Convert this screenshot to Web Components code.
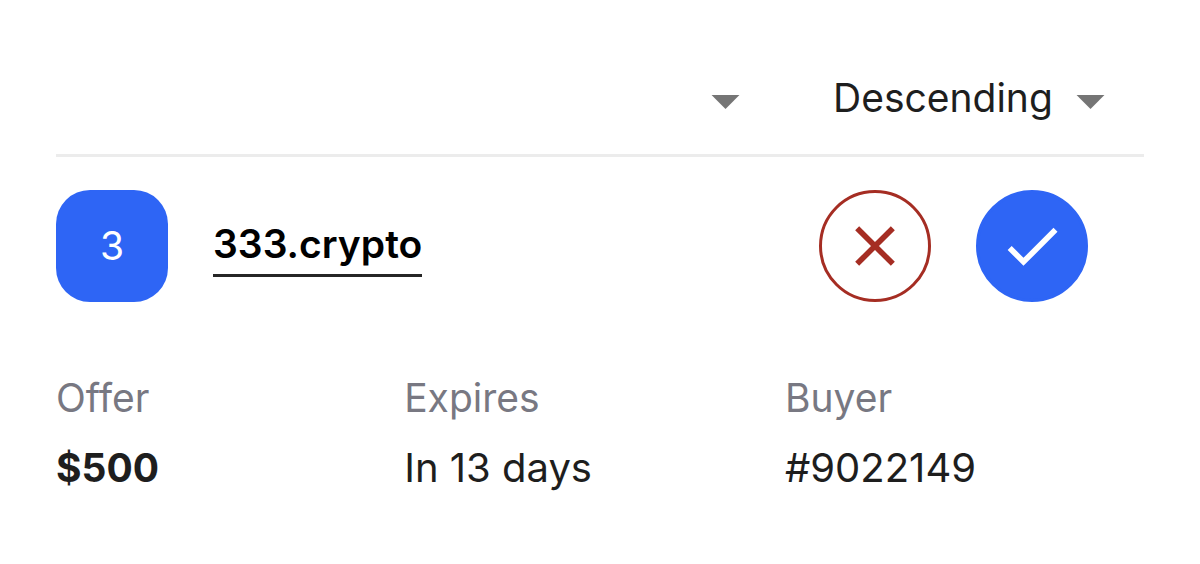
<!DOCTYPE html>
<html lang="en">
<head>
<meta charset="utf-8">
<meta name="viewport" content="width=device-width, initial-scale=1">
<title>Offers</title>
<style>
body { margin: 0; background: #fff; color: #1e1e1e; font: 400 39px/48px Inter, sans-serif; font-optical-sizing: none; font-variation-settings: "opsz" 14; font-variant-ligatures: no-common-ligatures; }
</style>
</head>
<body>
<offer-list></offer-list>
<script>
class BaseElement extends HTMLElement {
  connectedCallback() {
    if (this.shadowRoot) return;
    this.attachShadow({ mode: 'open' }).innerHTML = this.render();
  }
}

customElements.define('sort-select', class extends BaseElement {
  render() {
    const option = this.getAttribute('option') || '';
    return `<style>
      :host { display: grid; align-items: center; min-width: 0; }
      select, svg { grid-area: 1 / 1; }
      select { appearance: none; box-sizing: border-box; width: 100%; height: 67px; margin: 0; padding: 0 67px 5px 0; border: 0; background: none; color: inherit; font: inherit; font-variation-settings: inherit; line-height: 48px; }
      svg { justify-self: end; width: 67px; height: 67px; fill: #757575; pointer-events: none; }
    </style>
    <select aria-label="${this.getAttribute('label')}"><option>${option}</option></select>
    <svg viewBox="0 0 24 24" aria-hidden="true"><path d="M7 10l5 5 5-5z"/></svg>`;
  }
});

customElements.define('domain-tile', class extends BaseElement {
  render() {
    return `<style>
      :host { display: grid; place-items: center; flex: none; width: 112px; height: 112px; border-radius: 34px; background: #2e65f5; color: #fff; }
    </style><slot></slot>`;
  }
});

customElements.define('domain-link', class extends BaseElement {
  render() {
    return `<style>
      :host { display: block; }
      a { display: block; padding: 5px 0 6px; border-bottom: 3px solid #262626; color: #000; font-weight: 600; text-decoration: none; }
    </style><a href="#domain"><slot></slot></a>`;
  }
});

customElements.define('round-action', class extends BaseElement {
  render() {
    const paths = {
      reject: 'M19 6.41L17.59 5 12 10.59 6.41 5 5 6.41 10.59 12 5 17.59 6.41 19 12 13.41 17.59 19 19 17.59 13.41 12z',
      accept: 'M9 16.17L4.83 12l-1.42 1.41L9 19 21 7l-1.41-1.41z'
    };
    const kind = this.getAttribute('kind');
    return `<style>
      :host { display: block; }
      button { display: grid; place-items: center; box-sizing: border-box; width: 112px; height: 112px; margin: 0; padding: 0; border: 3px solid #2e65f5; border-radius: 50%; background: #2e65f5; color: #fff; cursor: pointer; }
      .reject { border-color: #a52d23; background: #fff; color: #a52d23; }
      svg { width: 68px; height: 68px; fill: currentColor; }
    </style>
    <button type="button" class="${kind}" aria-label="${this.getAttribute('label')}">
      <svg viewBox="0 0 24 24" aria-hidden="true"><path d="${paths[kind]}"/></svg>
    </button>`;
  }
});

customElements.define('offer-detail', class extends BaseElement {
  render() {
    return `<style>
      :host { display: flex; flex-direction: column; gap: 22px; }
      .label { color: #787882; }
      .value { font-size: 40px; }
      :host([strong]) .value { font-size: 39px; font-weight: 700; }
    </style>
    <div class="label">${this.getAttribute('label')}</div>
    <div class="value"><slot></slot></div>`;
  }
});

customElements.define('offer-list', class extends BaseElement {
  render() {
    return `<style>
      :host { display: block; padding: 67px 56px; }
      header { display: flex; gap: 74px; padding: 0 20px 20px 0; border-bottom: 3px solid #ececec; }
      .field { flex: 1; }
      .order { width: 291px; }
      .summary { display: flex; align-items: center; gap: 45px; padding: 33px 56px 0 0; }
      .actions { display: flex; gap: 45px; margin-left: auto; }
      .details { display: grid; grid-template-columns: 32fr 35fr 33fr; margin-top: 72px; }
    </style>
    <header>
      <sort-select class="field" label="Sort by"></sort-select>
      <sort-select class="order" label="Order" option="Descending"></sort-select>
    </header>
    <article>
      <div class="summary">
        <domain-tile>3</domain-tile>
        <domain-link>333.crypto</domain-link>
        <div class="actions">
          <round-action kind="reject" label="Reject offer"></round-action>
          <round-action kind="accept" label="Accept offer"></round-action>
        </div>
      </div>
      <div class="details">
        <offer-detail label="Offer" strong>$500</offer-detail>
        <offer-detail label="Expires">In 13 days</offer-detail>
        <offer-detail label="Buyer">#9022149</offer-detail>
      </div>
    </article>`;
  }
});
</script>
</body>
</html>
